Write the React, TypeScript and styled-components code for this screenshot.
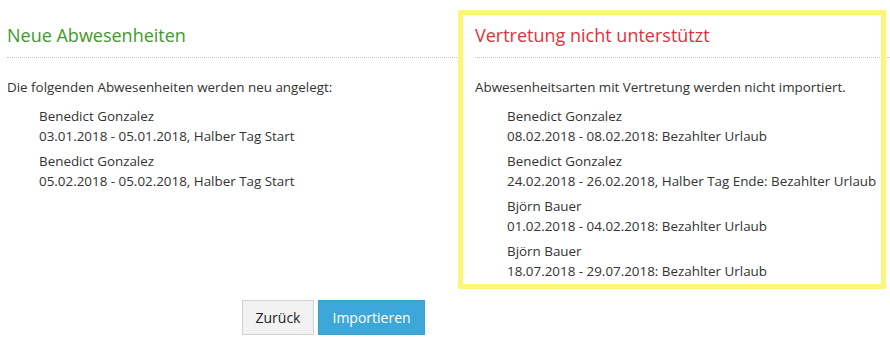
import React from "react";
import styled, { createGlobalStyle } from "styled-components";

const Global = createGlobalStyle`
  html, body { margin: 0; padding: 0; background: #fff; }
  body { font-family: "Open Sans", "Noto Sans", sans-serif; color: #333; }
`;

const Page = styled.div`
  position: relative;
  width: 890px;
  height: 349px;
  overflow: hidden;
  background: #fff;
`;

const Columns = styled.div`
  display: grid;
  grid-template-columns: 454px 415px;
  column-gap: 14px;
  padding-left: 7px;
  padding-top: 23px;
`;

const Column = styled.section``;

const Title = styled.h2<{ $tone: "ok" | "warn" }>`
  margin: 0;
  font-size: 18px;
  font-weight: 400;
  line-height: 25px;
  padding-bottom: 9px;
  color: ${(p) => (p.$tone === "ok" ? "#3f9a2c" : "#e2313b")};
  border-bottom: 1px dotted #c4c4c4;
`;

const Intro = styled.p`
  margin: 20px 0 0 0;
  font-size: 13.4px;
  line-height: 19px;
  color: #333;
`;

const List = styled.ul`
  list-style: none;
  margin: 10px 0 0 0;
  padding: 0 0 0 32px;
`;

const Item = styled.li`
  font-size: 13.4px;
  line-height: 19.5px;
  color: #333;
  & + & {
    margin-top: 6px;
  }
`;

const Line = styled.div``;

const Highlight = styled.div`
  position: absolute;
  left: 458px;
  top: 10px;
  width: 428px;
  height: 279px;
  box-sizing: border-box;
  border: 5px solid #fff679;
  pointer-events: none;
`;

const Actions = styled.div`
  display: flex;
  gap: 4px;
  padding-left: 242px;
  margin-top: 19px;
`;

const Button = styled.button<{ $primary?: boolean }>`
  height: 35px;
  box-sizing: border-box;
  padding: 0 ${(p) => (p.$primary ? 13.5 : 12.5)}px;
  font-family: "Open Sans", "Noto Sans", sans-serif;
  font-size: 14px;
  font-weight: 400;
  border: 1px solid ${(p) => (p.$primary ? "#3aa3d6" : "#d2d2d2")};
  background: ${(p) => (p.$primary ? "#3ea7d9" : "#f2f2f2")};
  color: ${(p) => (p.$primary ? "#fff" : "#222")};
  border-radius: 0;
  cursor: pointer;
`;

const newItems = [
  ["Benedict Gonzalez", "03.01.2018 - 05.01.2018, Halber Tag Start"],
  ["Benedict Gonzalez", "05.02.2018 - 05.02.2018, Halber Tag Start"],
];

const unsupported = [
  ["Benedict Gonzalez", "08.02.2018 - 08.02.2018: Bezahlter Urlaub"],
  ["Benedict Gonzalez", "24.02.2018 - 26.02.2018, Halber Tag Ende: Bezahlter Urlaub"],
  ["Björn Bauer", "01.02.2018 - 04.02.2018: Bezahlter Urlaub"],
  ["Björn Bauer", "18.07.2018 - 29.07.2018: Bezahlter Urlaub"],
];

export default function App() {
  return (
    <Page>
      <Global />
      <Columns>
        <Column>
          <Title $tone="ok">Neue Abwesenheiten</Title>
          <Intro>Die folgenden Abwesenheiten werden neu angelegt:</Intro>
          <List>
            {newItems.map(([n, d], i) => (
              <Item key={i}>
                <Line>{n}</Line>
                <Line>{d}</Line>
              </Item>
            ))}
          </List>
        </Column>
        <Column>
          <Title $tone="warn">Vertretung nicht unterstützt</Title>
          <Intro>Abwesenheitsarten mit Vertretung werden nicht importiert.</Intro>
          <List>
            {unsupported.map(([n, d], i) => (
              <Item key={i}>
                <Line>{n}</Line>
                <Line>{d}</Line>
              </Item>
            ))}
          </List>
        </Column>
      </Columns>
      <Actions>
        <Button>Zurück</Button>
        <Button $primary>Importieren</Button>
      </Actions>
      <Highlight />
    </Page>
  );
}
